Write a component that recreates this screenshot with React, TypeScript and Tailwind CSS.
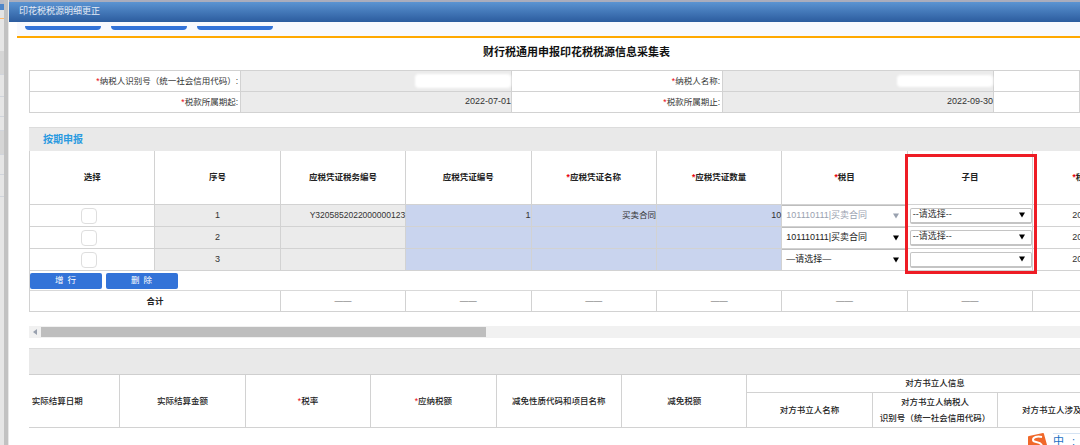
const font = "font-['Liberation_Sans','Noto_Sans_CJK_SC',sans-serif]";

const box = 'flex items-center border-r border-b border-[#d2d2d2] min-w-0 whitespace-nowrap';
const cell = `${box} justify-center`;
const right = `${box} justify-end`;
const gray = 'bg-[#ebebeb]';
const blue = 'bg-[#c9d4ee]';

function Star() {
  return <span className="text-red-600">*</span>;
}

function Arrow({ muted }: { muted?: boolean }) {
  return (
    <svg viewBox="0 0 6 5" className={`w-1.5 h-1.5 shrink-0 ${muted ? 'fill-gray-400' : 'fill-black'}`}>
      <path d="M0 0h6L3 5z" />
    </svg>
  );
}

function TaxSelect({ text, muted }: { text: string; muted?: boolean }) {
  return (
    <div className={`${box} justify-between bg-white pl-1 pr-2 text-[9px] border-t border-t-[#bdbdbd] ${muted ? 'text-gray-400' : 'text-[#222]'}`}>
      <span>{text}</span>
      <Arrow muted={muted} />
    </div>
  );
}

function SubSelect({ text }: { text?: string }) {
  return (
    <div className={`${cell} pl-0.5`}>
      <div className="flex h-4 w-full items-center justify-between rounded-xs border border-b-2 border-[#c4c4c4] bg-white px-0.5 pr-1.5 text-[9px] text-[#333]">
        <span>{text}</span>
        <Arrow />
      </div>
    </div>
  );
}

function Checkbox() {
  return <div className="size-4 rounded-sm border border-[#dedede] bg-white" />;
}

const heads = ['选择', '序号', '应税凭证税务编号', '应税凭证编号', '*应税凭证名称', '*应税凭证数量', '*税目', '子目', '*税款所属期'];

const rows = [
  { no: '1', code: 'Y3205852022000000123', num: '1', name: '买卖合同', qty: '10', tax: '101110111|买卖合同', muted: true, sub: '--请选择--' },
  { no: '2', code: '', num: '', name: '', qty: '', tax: '101110111|买卖合同', muted: false, sub: '--请选择--' },
  { no: '3', code: '', num: '', name: '', qty: '', tax: '—请选择—', muted: false, sub: '' },
];

const strip = [
  'h-1 bg-[#b9bcc6]',
  'h-1.5 bg-[#4f86c9]',
  'h-2 bg-[#e4e4e4]',
  'h-px bg-orange-300',
  'h-8 bg-[#e6e6e6]',
  'h-6 bg-[#d6d6d6] border-b border-gray-300',
  'h-5.5 bg-[#e6e6e6] border-b border-gray-300',
  'h-5 bg-[#e6e6e6] border-b border-gray-300',
  'h-3.5 bg-[#e6e6e6] border-b border-gray-300',
  'h-6 bg-[#d6d6d6] border-b border-gray-300',
  'h-5 bg-[#e6e6e6] border-b border-gray-300',
  'h-5.5 bg-[#e6e6e6] border-b border-gray-300',
  'flex-1 bg-[#e6e6e6]',
];

export default function App() {
  return (
    <div className={`${font} relative flex h-[445px] w-[1080px] overflow-hidden bg-white text-[8.5px] text-[#333]`}>
      {/* window behind the dialog */}
      <div className="flex w-1 shrink-0 flex-col">
        {strip.map((c, i) => (
          <div key={i} className={c} />
        ))}
      </div>
      <div className="w-1 shrink-0 bg-[#c2c2c2]" />
      <div className="w-px shrink-0 bg-[#e8e8e8]" />

      <div className="flex min-w-0 flex-1 flex-col overflow-hidden">
        <div className="h-0.5 shrink-0 bg-[#a9adbd]" />
        <div className="flex h-5 shrink-0 items-center bg-linear-to-b from-[#5b94d2] to-[#2c5c9e] pl-2.5 text-[9px] text-[#e4ecf6]">
          印花税税源明细更正
        </div>

        <div className="pl-2">
          <div className="flex h-3.5 items-start gap-2.5 bg-[#f8f9fd] pl-2 pt-1">
            <div className="h-1 w-19 rounded-b-sm bg-[#3373d8]" />
            <div className="h-1 w-19 rounded-b-sm bg-[#3373d8]" />
            <div className="h-1 w-19 rounded-b-sm bg-[#3373d8]" />
          </div>
          <div className="h-0.5 bg-[#ffa800]" />
        </div>

        <div className="flex h-8 shrink-0 items-center justify-center pl-16 pb-1 text-[11px] font-bold text-[#111]">
          财行税通用申报印花税税源信息采集表
        </div>

        <div className="flex flex-col pl-5">
          {/* taxpayer info */}
          <div className="grid grid-cols-[211px_271px_211px_271px_1fr] border-t border-l border-[#d2d2d2]">
            <div className={`${right} h-5.25 pr-0.5`}>
              <Star />
              纳税人识别号（统一社会信用代码）:
            </div>
            <div className={`${right} ${gray}`}>
              <div className="h-3.5 w-24 rounded-sm bg-white blur-[1px]" />
            </div>
            <div className={`${right} pr-0.5`}>
              <Star />
              纳税人名称:
            </div>
            <div className={`${right} ${gray}`}>
              <div className="h-3 w-24 rounded-sm bg-white blur-[1px]" />
            </div>
            <div className={cell} />

            <div className={`${right} h-5.25 pr-0.5`}>
              <Star />
              税款所属期起:
            </div>
            <div className={`${right} ${gray} text-[9px]`}>2022-07-01</div>
            <div className={`${right} pr-0.5`}>
              <Star />
              税款所属期止:
            </div>
            <div className={`${right} ${gray} text-[9px]`}>2022-09-30</div>
            <div className={cell} />
          </div>

          {/* main table */}
          <div className="mt-3.5 flex h-6 items-center border-t border-[#dcdcdc] bg-[#e9e9e9] pl-3.5 text-[10px] font-bold text-[#2a9ae0]">
            按期申报
          </div>
          <div className="grid grid-cols-[repeat(9,125.4px)] border-l border-[#d2d2d2]">
            {heads.map((h) => (
              <div key={h} className={`${cell} h-13.5 font-bold text-[#222]`}>
                {h.startsWith('*') ? (
                  <>
                    <Star />
                    {h.slice(1)}
                  </>
                ) : (
                  h
                )}
              </div>
            ))}

            {rows.map((r) => (
              <div key={r.no} className="contents">
                <div className={`${cell} h-5.5 pr-1.5`}>
                  <Checkbox />
                </div>
                <div className={`${cell} ${gray} text-[9px]`}>{r.no}</div>
                <div className={`${right} ${gray}`}>{r.code}</div>
                <div className={`${right} ${blue} text-[9px]`}>{r.num}</div>
                <div className={`${right} ${blue}`}>{r.name}</div>
                <div className={`${right} ${blue} text-[9px]`}>{r.qty}</div>
                <TaxSelect text={r.tax} muted={r.muted} />
                <SubSelect text={r.sub} />
                <div className={`${cell} text-[9px]`}>2022-07-01</div>
              </div>
            ))}

            <div className="col-span-9 flex h-5 items-center gap-1 border-b border-[#d9d9d9] text-white">
              <div className="flex h-4 w-18 items-center justify-center rounded-xs bg-[#3373d8] tracking-widest">增 行</div>
              <div className="flex h-4 w-18 items-center justify-center rounded-xs bg-[#3373d8] tracking-widest">删 除</div>
            </div>

            <div className={`${cell} col-span-2 h-5.25 font-bold text-[#222]`}>合计</div>
            {[0, 1, 2, 3, 4, 5, 6].map((i) => (
              <div key={i} className={`${cell} text-[#666]`}>
                ——
              </div>
            ))}
          </div>

          {/* scrollbar */}
          <div className="mt-3.5 flex h-3 items-center bg-[#f1f1f1]">
            <div className="flex w-3 justify-center">
              <div className="border-y-[3px] border-r-4 border-y-transparent border-r-gray-400" />
            </div>
            <div className="h-2.5 w-[445px] bg-[#bebebe]" />
          </div>

          {/* lower table */}
          <div className="mt-2.5 h-6.5 border-t border-[#dcdcdc] bg-[#e9e9e9]" />
          <div className="overflow-hidden">
            <div className="-ml-8.5 grid grid-cols-[repeat(9,125.4px)] grid-rows-[18px_35px] border-t border-[#cfcfcf] font-medium text-[#222]">
              <div className={`${cell} row-span-2`}>实际结算日期</div>
              <div className={`${cell} row-span-2`}>实际结算金额</div>
              <div className={`${cell} row-span-2`}>
                <Star />
                税率
              </div>
              <div className={`${cell} row-span-2`}>
                <Star />
                应纳税额
              </div>
              <div className={`${cell} row-span-2`}>减免性质代码和项目名称</div>
              <div className={`${cell} row-span-2`}>减免税额</div>
              <div className={`${cell} col-span-3`}>对方书立人信息</div>
              <div className={cell}>对方书立人名称</div>
              <div className={`${cell} flex-col gap-2 leading-none`}>
                <span>对方书立人纳税人</span>
                <span>识别号（统一社会信用代码）</span>
              </div>
              <div className={cell}>对方书立人涉及金额</div>
            </div>
          </div>
        </div>
      </div>

      {/* highlight around the 子目 column */}
      <div className="pointer-events-none absolute left-[905px] top-[154px] h-[120px] w-[132px] border-[3px] border-[#ee1c25]" />

      {/* input method bar */}
      <div className="absolute left-[1027px] top-[433px] flex items-start gap-1.5">
        <svg viewBox="0 0 20 12" className="h-3 w-5">
          <path d="M1 4Q1 3 2 3L16 0Q17 0 17 1L20 12H1z" fill="#f0682a" />
          <path d="M15 4C10 3 6 4 6 7C6 10 12 8 15 12" fill="none" stroke="#fff" strokeWidth="2" />
        </svg>
        <div className="flex w-8 gap-2 border-t border-[#d5e3f3] pt-0.5 text-[11px] leading-none text-[#1c6fc4]">
          <span>中</span>
          <span>:</span>
        </div>
      </div>
    </div>
  );
}
